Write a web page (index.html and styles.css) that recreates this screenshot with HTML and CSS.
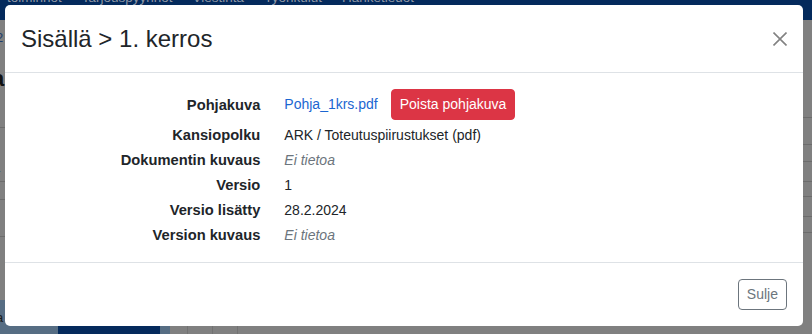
FILE: index.html
```html
<!DOCTYPE html>
<html lang="fi">
<head>
<meta charset="utf-8">
<title>Sisällä &gt; 1. kerros</title>
<link rel="stylesheet" href="styles.css">
</head>
<body>
<div class="page">
  <nav class="topnav">
    <span>toiminnot</span><span>Tarjouspyynnöt</span><span>Viestintä</span><span>Työnkulut</span><span>Hanketiedot</span>
  </nav>
  <div class="bg-main">
    <div class="bg-left">
      <div class="bg-row l1"><span class="bg-link">2</span><span class="bg-head">a</span></div>
      <div class="bg-row l2"><span class="bg-link small">a</span></div>
      <div class="bg-row l3"></div>
      <div class="bg-row l4"></div>
      <div class="bg-row l5"></div>
    </div>
    <div class="bg-right">
      <div class="bg-row r1"></div>
      <div class="bg-row r2"></div>
      <div class="bg-row r3"></div>
      <div class="bg-row r4"></div>
      <div class="bg-row r5"></div>
      <div class="bg-row r6"></div>
      <div class="bg-row r7"></div>
      <div class="bg-row r8"></div>
    </div>
  </div>
  <div class="bg-bottom">
    <div class="seg s1"><span>a</span></div>
    <div class="seg s2"></div>
    <div class="seg s3"></div>
    <div class="seg s4"><i></i><i></i><i></i></div>
  </div>
</div>

<div class="modal">
  <div class="modal-header">
    <h5 class="modal-title">Sisällä &gt; 1. kerros</h5>
    <button class="btn-close" type="button" aria-label="Sulje">
      <svg width="14" height="14" viewBox="0 0 14 14"><path d="M0.5 0.5 L13.5 13.5 M13.5 0.5 L0.5 13.5" stroke="#828282" stroke-width="1.6" fill="none"/></svg>
    </button>
  </div>
  <div class="modal-body">
    <div class="info">
      <div class="lbl first">Pohjakuva</div>
      <div class="val first"><a class="file-link" href="#">Pohja_1krs.pdf</a><button class="btn btn-danger" type="button">Poista pohjakuva</button></div>
      <div class="lbl">Kansiopolku</div>
      <div class="val">ARK / Toteutuspiirustukset (pdf)</div>
      <div class="lbl">Dokumentin kuvaus</div>
      <div class="val muted">Ei tietoa</div>
      <div class="lbl">Versio</div>
      <div class="val">1</div>
      <div class="lbl">Versio lisätty</div>
      <div class="val">28.2.2024</div>
      <div class="lbl">Version kuvaus</div>
      <div class="val muted">Ei tietoa</div>
    </div>
  </div>
  <div class="modal-footer">
    <button class="btn btn-outline" type="button">Sulje</button>
  </div>
</div>
</body>
</html>
```

FILE: styles.css
```css
* { box-sizing: border-box; }
html, body { margin: 0; padding: 0; }
body {
  width: 812px;
  height: 334px;
  overflow: hidden;
  font-family: "Liberation Sans", Arial, sans-serif;
  color: #212529;
  background: #808080;
}

/* ---------- dimmed backdrop page ---------- */
.page {
  width: 812px;
  height: 334px;
  display: flex;
  flex-direction: column;
  background: #808080;
  overflow: hidden;
}
.topnav {
  height: 20px;
  flex: none;
  background: #042a5c;
  display: flex;
  gap: 20px;
  padding-left: 7px;
  font-size: 13.5px;
  color: #8f97a5;
  white-space: nowrap;
}
.topnav span {
  margin-top: -10px;
  line-height: 16px;
}
.bg-main {
  height: 280px;
  flex: none;
  display: flex;
}
.bg-left { width: 400px; display: flex; flex-direction: column; }
.bg-right { flex: 1; display: flex; flex-direction: column; }
.bg-row { border-bottom: 1px solid #6c6c6c; flex: none; }
.bg-left .l1 { height: 108px; display: flex; flex-direction: column; }
.bg-left .l2 { height: 54px; padding-top: 33px; }
.bg-left .l3 { height: 18px; }
.bg-left .l4 { height: 37px; }
.bg-left .l5 { height: 63px; border-bottom: 0; }
.bg-link {
  color: #1d3c6b;
  font-size: 13px;
  line-height: 14px;
  margin-left: -4px;
  margin-top: 11px;
}
.bg-link.small { display: block; margin-left: -7px; margin-top: 0; }
.bg-head {
  color: #111;
  font-size: 22px;
  font-weight: bold;
  line-height: 24px;
  margin-left: -8px;
  margin-top: 22px;
}
.bg-right .r1 { height: 98px; }
.bg-right .r2 { height: 27px; }
.bg-right .r3 { height: 17px; }
.bg-right .r4 { height: 20px; }
.bg-right .r5 { height: 15px; }
.bg-right .r6 { height: 20px; }
.bg-right .r7 { height: 16px; }
.bg-right .r8 { height: 67px; border-bottom: 0; }

.bg-bottom {
  height: 34px;
  flex: none;
  display: flex;
}
.seg { height: 100%; }
.s1 { width: 58px; background: #566d83; color: #1a1a1a; font-size: 13px; padding-top: 10px; }
.s1 span { margin-left: -4px; }
.s2 { width: 102px; background: #042a5c; }
.s3 { width: 10px; background: #566d83; }
.s4 { flex: 1; background: #808080; display: flex; padding-left: 17px; gap: 24px; }
.s4 i { width: 1px; height: 100%; background: #727272; }

/* ---------- modal ---------- */
.modal {
  position: absolute;
  top: 5px;
  left: 5px;
  width: 798px;
  height: 321px;
  background: #fff;
  border-radius: 5px;
  display: flex;
  flex-direction: column;
  overflow: hidden;
}
.modal-header {
  display: flex;
  align-items: center;
  justify-content: space-between;
  padding: 16px;
  border-bottom: 1px solid #dee2e6;
}
.modal-title {
  margin: 0;
  font-size: 24px;
  font-weight: 400;
  line-height: 35px;
  color: #212529;
}
.btn-close {
  width: 14px;
  height: 14px;
  padding: 0;
  border: 0;
  background: transparent;
  display: flex;
}
.modal-body {
  flex: 1;
  padding: 17px 16px 15px;
}
.info {
  display: grid;
  grid-template-columns: 1fr 2fr;
  row-gap: 4px;
  margin: 0 -12px;
  font-size: 14px;
  line-height: 21px;
}
.lbl {
  padding: 0 12px;
  text-align: right;
  font-weight: bold;
  font-size: 14.7px;
}
.val { padding: 0 12px; }
.lbl.first, .val.first {
  height: 31px;
  display: flex;
  align-items: center;
}
.val.first { margin-top: -1px; }
.lbl.first { justify-content: flex-end; }
.val.first { gap: 13px; }
.file-link { color: #1b66d1; text-decoration: none; }
.muted { color: #6c757d; font-style: italic; }

.btn {
  font-family: inherit;
  font-size: 14px;
  line-height: 21px;
  padding: 4px 8px;
  border-radius: 4px;
  border: 1px solid transparent;
}
.btn-danger {
  background: #dc3545;
  border-color: #dc3545;
  color: #fff;
}
.btn-outline {
  background: #fff;
  border-color: #6c757d;
  color: #6c757d;
}
.modal-footer {
  display: flex;
  justify-content: flex-end;
  padding: 16px;
  border-top: 1px solid #dee2e6;
}
```
